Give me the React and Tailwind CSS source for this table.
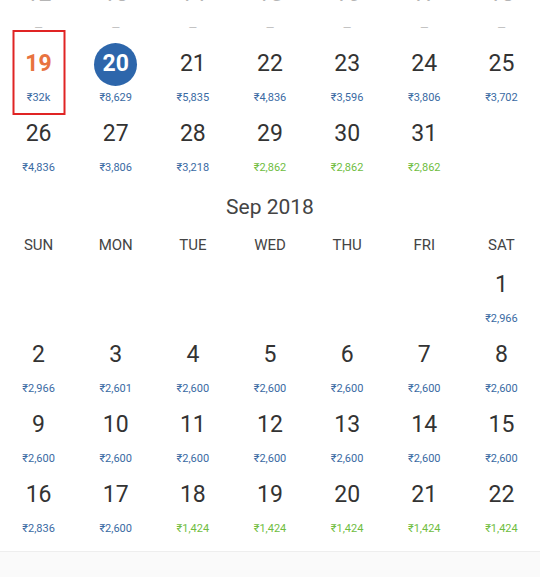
import React from "react";

const aug = [
  [
    { d: 12, past: true },
    { d: 13, past: true },
    { d: 14, past: true },
    { d: 15, past: true },
    { d: 16, past: true },
    { d: 17, past: true },
    { d: 18, past: true },
  ],
  [
    { d: 19, p: "₹32k", selected: true },
    { d: 20, p: "₹8,629", today: true },
    { d: 21, p: "₹5,835" },
    { d: 22, p: "₹4,836" },
    { d: 23, p: "₹3,596" },
    { d: 24, p: "₹3,806" },
    { d: 25, p: "₹3,702" },
  ],
  [
    { d: 26, p: "₹4,836" },
    { d: 27, p: "₹3,806" },
    { d: 28, p: "₹3,218" },
    { d: 29, p: "₹2,862", cheap: true },
    { d: 30, p: "₹2,862", cheap: true },
    { d: 31, p: "₹2,862", cheap: true },
    null,
  ],
];

const sep = [
  [null, null, null, null, null, null, { d: 1, p: "₹2,966" }],
  [
    { d: 2, p: "₹2,966" },
    { d: 3, p: "₹2,601" },
    { d: 4, p: "₹2,600" },
    { d: 5, p: "₹2,600" },
    { d: 6, p: "₹2,600" },
    { d: 7, p: "₹2,600" },
    { d: 8, p: "₹2,600" },
  ],
  [
    { d: 9, p: "₹2,600" },
    { d: 10, p: "₹2,600" },
    { d: 11, p: "₹2,600" },
    { d: 12, p: "₹2,600" },
    { d: 13, p: "₹2,600" },
    { d: 14, p: "₹2,600" },
    { d: 15, p: "₹2,600" },
  ],
  [
    { d: 16, p: "₹2,836" },
    { d: 17, p: "₹2,600" },
    { d: 18, p: "₹1,424", cheap: true },
    { d: 19, p: "₹1,424", cheap: true },
    { d: 20, p: "₹1,424", cheap: true },
    { d: 21, p: "₹1,424", cheap: true },
    { d: 22, p: "₹1,424", cheap: true },
  ],
];

const weekdays = ["SUN", "MON", "TUE", "WED", "THU", "FRI", "SAT"];

const DayCell = ({ day }) => {
  if (!day) return <div className="h-[70px]" />;

  let numberCls = "text-[23px] text-[#333333]";
  if (day.past) numberCls = "text-[23px] text-[#b5b5b5]";
  if (day.selected) numberCls = "text-[23px] font-bold text-[#e8733f]";

  return (
    <div className="relative flex h-[70px] flex-col items-center">
      {/* selected date box */}
      {day.selected && (
        <div className="absolute left-1/2 top-[-14px] h-[85px] w-[53px] -translate-x-1/2 border-2 border-[#e02424]" />
      )}
      <div className="flex h-[40px] items-center justify-center">
        {day.today ? (
          <span className="flex h-[43px] w-[43px] items-center justify-center rounded-full bg-[#2d66ab] text-[23px] font-bold text-white">
            {day.d}
          </span>
        ) : (
          <span className={numberCls}>{day.d}</span>
        )}
      </div>
      <div
        className={`mt-[6px] h-[16px] text-[11px] leading-[16px] ${
          day.past
            ? "text-[#bdbdbd]"
            : day.cheap
            ? "text-[#6fbd3f]"
            : "text-[#3a6aa3]"
        }`}
      >
        {day.past ? "—" : day.p}
      </div>
    </div>
  );
};

const Week = ({ days }) => (
  <div className="grid grid-cols-7">
    {days.map((day, i) => (
      <DayCell key={i} day={day} />
    ))}
  </div>
);

export default function App() {
  return (
    <div
      className="h-[577px] w-[540px] overflow-hidden bg-white"
      style={{ fontFamily: "Roboto, 'Noto Sans', sans-serif" }}
    >
      {/* August (scrolled) */}
      <div className="-mt-[26px]">
        {aug.map((w, i) => (
          <Week key={i} days={w} />
        ))}
      </div>

      {/* September */}
      <div className="flex h-[48px] items-center justify-center text-[21px] text-[#444444]">
        Sep 2018
      </div>
      <div className="mb-[7px] grid h-[26px] grid-cols-7">
        {weekdays.map((w) => (
          <div
            key={w}
            className="flex items-center justify-center text-[15px] text-[#444444]"
          >
            {w}
          </div>
        ))}
      </div>
      {sep.map((w, i) => (
        <Week key={i} days={w} />
      ))}

      {/* bottom bar */}
      <div className="mt-[6px] h-[40px] border-t border-[#eeeeee] bg-[#fafafa]" />
    </div>
  );
}
